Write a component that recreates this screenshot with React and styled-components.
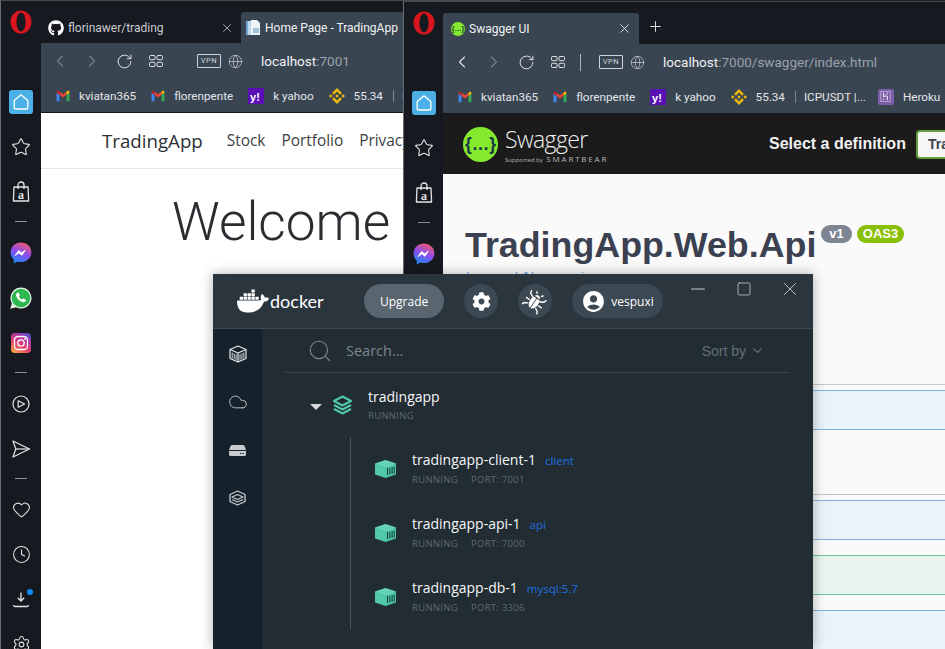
import React, { useId } from 'react'
import styled, { createGlobalStyle } from 'styled-components'
import { FaGithub, FaCog } from 'react-icons/fa'
import { MdAccountCircle } from 'react-icons/md'
import { SiDocker, SiBinance, SiHeroku } from 'react-icons/si'
import { ChevronLeft, ChevronRight, RotateCw, Globe, X, Plus, Star, Heart, Clock, Settings, Search, Cloud, ChevronDown, Minus, Square } from 'lucide-react'

const GlobalStyle = createGlobalStyle`
  html, body { margin: 0; padding: 0; background: #1b1e24; }
  * { box-sizing: border-box; }
`

const Desktop = styled.div`
  position: relative;
  width: 945px;
  height: 649px;
  overflow: hidden;
  font-family: "Open Sans", "Liberation Sans", sans-serif;
`

const BrowserFrame = styled.section`
  position: absolute;
  left: ${p => p.$x}px;
  top: ${p => p.$y}px;
  width: ${p => p.$w}px;
  height: 649px;
  display: flex;
  background: #16191f;
  border-top: 1px solid #4a4a4c;
  border-left: 1px solid #6a6c70;
  z-index: ${p => p.$z};
`

const RailBox = styled.nav`
  width: ${p => p.$w}px;
  flex: none;
  padding-top: 8px;
  display: flex;
  flex-direction: column;
  align-items: center;
  color: #e4e6e9;
`

const RailLogo = styled.div`
  height: 26px;
  margin-bottom: 44px;
  display: flex;
  align-items: center;
`

const RailItem = styled.div`
  position: relative;
  height: 45px;
  flex: none;
  display: flex;
  align-items: center;
  justify-content: center;
`

const RailDash = styled.div`
  flex: none;
  width: 12px;
  height: 1px;
  margin: 7px 0 8px;
  background: #8b8e93;
`

const HomeTile = styled.div`
  width: 24px;
  height: 24px;
  border-radius: 3px;
  background: #4ab0e6;
  display: flex;
  align-items: center;
  justify-content: center;
`

const Dot = styled.span`
  position: absolute;
  top: 12px;
  right: -3px;
  width: 6px;
  height: 6px;
  border-radius: 50%;
  background: #0a8cf0;
`

const BrowserMain = styled.div`
  flex: 1;
  min-width: 0;
  display: flex;
  flex-direction: column;
  font-family: Roboto, "Open Sans", sans-serif;
`

const TabRow = styled.div`
  height: 42px;
  flex: none;
  display: flex;
  align-items: flex-end;
`

const Tab = styled.div`
  width: ${p => p.$w}px;
  height: 31px;
  flex: none;
  display: flex;
  align-items: center;
  gap: 4px;
  padding: 0 7px 0 ${p => p.$pad}px;
  border-radius: ${p => (p.$active ? '3px 3px 0 0' : '0')};
  background: ${p => (p.$active ? '#3a4552' : 'transparent')};
  color: ${p => (p.$active ? '#f1f3f5' : '#c9ccd1')};
  font-size: 12px;
  white-space: nowrap;
`

const TabTitle = styled.span`
  flex: 1;
  overflow: hidden;
`

const NewTab = styled.div`
  margin: 0 0 6px 8px;
  color: #e8e9eb;
  height: 20px;
`

const Toolbar = styled.div`
  flex: none;
  height: 70px;
  background: #3a4552;
  border-bottom: 1px solid #14161a;
`

const NavRow = styled.div`
  height: 36px;
  padding-left: 3px;
  display: flex;
  align-items: center;
`

const NavBtn = styled.div`
  width: 32px;
  display: flex;
  justify-content: center;
  color: ${p => (p.$dim ? '#77808b' : '#dfe2e6')};
`

const NavDivider = styled.div`
  width: 1px;
  height: 17px;
  margin: 0 18px 0 6px;
  background: ${p => (p.$hidden ? 'transparent' : '#aeb3b9')};
`

const VpnBadge = styled.div`
  width: 24px;
  height: 14px;
  border: 1px solid #cfd3d7;
  border-radius: 1px;
  color: #cfd3d7;
  font-size: 7.5px;
  letter-spacing: 0.6px;
  line-height: 12px;
  text-align: center;
`

const GlobeSlot = styled.div`
  margin: 0 18px 0 7px;
  height: 15px;
  display: flex;
  color: #cfd3d7;
`

const Url = styled.div`
  font-size: 13.5px;
  color: #9aa2ab;
  white-space: nowrap;
  b { font-weight: 400; color: #f0f2f4; }
`

const BookmarkRow = styled.div`
  height: 33px;
  padding-left: 15px;
  display: flex;
  align-items: center;
  gap: 15px;
  overflow: hidden;
`

const Bookmark = styled.div`
  display: flex;
  align-items: center;
  gap: 9px;
  flex: none;
  font-size: 11.7px;
  color: #e3e5e8;
  white-space: nowrap;
`

const BookmarkBar = styled.span`
  flex: none;
  width: 1px;
  height: 12px;
  margin: 0 -7px 0 -5px;
  background: #7f8791;
`

const Page = styled.div`
  flex: 1;
  background: #fff;
  font-family: "Open Sans", sans-serif;
`

const TopNav = styled.div`
  height: 56px;
  padding-left: 61px;
  display: flex;
  align-items: center;
  gap: 16px;
  border-bottom: 1px solid #e6e6e6;
  color: #3a3f45;
  font-size: 15.4px;
  white-space: nowrap;
`

const Brand = styled.span`
  font-size: 18.7px;
  margin-right: 8px;
  color: #2b3036;
`

const Welcome = styled.h1`
  margin: 0;
  padding: 17px 0 0 131px;
  font-family: Roboto, sans-serif;
  font-size: 53.2px;
  line-height: 72px;
  font-weight: 300;
  color: #2a2d31;
  white-space: nowrap;
`

const SwaggerBar = styled.header`
  height: 60px;
  flex: none;
  padding: 0 0 0 20px;
  background: #1b1b1b;
  display: flex;
  align-items: center;
  white-space: nowrap;
  font-family: "Open Sans", sans-serif;
  > * { flex: none; }
`

const SwaggerMark = styled.div`
  margin-left: 7px;
  color: #fff;
  width: 264px;
`

const SwaggerWord = styled.div`
  font-size: 23px;
  font-weight: 300;
  line-height: 30px;
  letter-spacing: -0.6px;
  color: #f1f1f1;
`

const SwaggerSub = styled.div`
  font-size: 6px;
  line-height: 9px;
  color: #b8b8b8;
  b { font-size: 8px; font-weight: 400; letter-spacing: 1.8px; margin-left: 2px; }
`

const DefinitionLabel = styled.div`
  font: 700 16px "Liberation Sans", sans-serif;
  color: #f2f2f2;
`

const DefinitionSelect = styled.div`
  margin-left: 10px;
  width: 120px;
  height: 29px;
  padding-left: 10px;
  border: 2px solid #62a03f;
  border-radius: 4px;
  background: #f7f7f7;
  color: #3b4151;
  font: 700 14px/25px "Liberation Sans", sans-serif;
`

const SwaggerBody = styled.div`
  flex: 1;
  background: #fafafa;
  font-family: "Liberation Sans", sans-serif;
`

const InfoBlock = styled.div`
  height: 210px;
  padding: 49px 0 0 22px;
`

const TitleRow = styled.div`
  display: flex;
  align-items: flex-start;
  gap: 5px;
  white-space: nowrap;
`

const ApiTitle = styled.h2`
  margin: 0;
  font-size: 35.8px;
  line-height: 44px;
  font-weight: 700;
  color: #3b4151;
`

const VersionBadge = styled.span`
  margin-top: 2px;
  height: 18px;
  padding: 0 ${p => p.$pad}px;
  border-radius: 9px;
  background: ${p => p.$bg};
  color: #fff;
  font-size: 13px;
  font-weight: 700;
  line-height: 18px;
`

const SpecLink = styled.div`
  color: #4990e2;
  font-size: 12px;
  margin-top: 3px;
`

const TagHead = styled.div`
  height: ${p => p.$h}px;
  margin-bottom: 5px;
  border-bottom: 1px solid #c4c4c6;
`

const OpBlock = styled.div`
  height: ${p => p.$h || 40}px;
  margin-bottom: 15px;
  border-top: 1px solid ${p => p.$line};
  border-bottom: 1px solid ${p => p.$line};
  background: ${p => p.$bg};
`

const DockerWindow = styled.section`
  position: absolute;
  left: 213px;
  top: 274px;
  width: 600px;
  height: 375px;
  z-index: 3;
  display: flex;
  flex-direction: column;
  background: #222c33;
  color: #fff;
  box-shadow: 0 0 12px rgba(0, 0, 0, 0.3);
`

const DockerHead = styled.header`
  height: 55px;
  flex: none;
  padding: 10px 0 0 24px;
  display: flex;
  align-items: flex-start;
  background: #2a353d;
  border-bottom: 1px solid #3e4a52;
  > * { flex: none; }
`

const DockerLogo = styled.div`
  width: 107px;
  height: 34px;
  display: flex;
  align-items: center;
  gap: 1px;
  font-family: "Lato", sans-serif;
  font-size: 18px;
`

const PillBtn = styled.div`
  height: 34px;
  padding: 0 ${p => p.$pad}px;
  margin-left: 20px;
  border-radius: 17px;
  display: flex;
  align-items: center;
  gap: 5px;
  font-size: 12px;
  background: ${p => p.$bg};
`

const RoundBtn = styled.div`
  width: 34px;
  height: 34px;
  margin-left: 20px;
  border-radius: 50%;
  background: #3c4952;
  display: flex;
  align-items: center;
  justify-content: center;
`

const WinControls = styled.div`
  margin: -6px 0 0 auto;
  display: flex;
  color: #c9ced2;
`

const WinBtn = styled.div`
  width: 46px;
  height: 22px;
  display: flex;
  align-items: center;
  justify-content: center;
`

const DockerBody = styled.div`
  flex: 1;
  display: flex;
  min-height: 0;
`

const DockerSide = styled.aside`
  width: 49px;
  flex: none;
  padding-top: 1px;
  background: #15222b;
  color: #c7ccd0;
`

const SideItem = styled.div`
  height: 48px;
  display: flex;
  align-items: center;
  justify-content: center;
`

const DockerContent = styled.div`
  flex: 1;
  padding: 0 24px 0 23px;
`

const SearchBar = styled.div`
  height: 44px;
  padding: 0 24px 0 22px;
  display: flex;
  align-items: center;
  gap: 13px;
  border-bottom: 1px solid #3d484f;
  color: #7c878f;
`

const SearchText = styled.div`
  flex: 1;
  font-size: 14.5px;
`

const SortBy = styled.div`
  display: flex;
  align-items: center;
  gap: 4px;
  font: 14px "Liberation Sans", sans-serif;
  color: #636f77;
`

const ProjectRow = styled.div`
  height: 64px;
  padding-left: 25px;
  display: flex;
  align-items: center;
`

const Caret = styled.span`
  width: 0;
  height: 0;
  margin: 4px 10px 0 0;
  border-left: 6px solid transparent;
  border-right: 6px solid transparent;
  border-top: 6px solid #d4d8db;
`

const Labels = styled.div`
  margin-left: ${p => p.$gap}px;
  padding-top: 2px;
  white-space: nowrap;
`

const ItemName = styled.div`
  font-size: 14px;
  line-height: 18px;
  color: #f5f7f8;
  span { margin-left: 9px; font-size: 11.5px; color: #1f70e0; }
`

const ItemMeta = styled.div`
  margin-top: 1px;
  font-size: 9.5px;
  line-height: 18px;
  letter-spacing: 0.3px;
  color: #5f6b74;
  span { margin-left: 13px; }
`

const ContainerGroup = styled.div`
  margin-left: 65px;
  padding-left: 24px;
  border-left: 1px solid #4a565e;
`

const ContainerRow = styled.div`
  height: 64px;
  display: flex;
  align-items: center;
`

const OperaLogo = () => (
  <svg width="24" height="26" viewBox="0 0 24 26">
    <ellipse cx="12" cy="13" rx="10.5" ry="11.5" fill="#d9161f" />
    <ellipse cx="12" cy="13" rx="4.6" ry="9.4" fill="#16191f" />
  </svg>
)

const HomeGlyph = () => (
  <svg width="18" height="18" viewBox="0 0 18 18" fill="none" stroke="#fff" strokeWidth="1.3" strokeLinejoin="round">
    <path d="M2.2 7.6 9 1.8l6.8 5.8v7.2c0 .7-.5 1.2-1.2 1.2H3.4c-.7 0-1.2-.5-1.2-1.2z" />
  </svg>
)

const BagGlyph = () => (
  <svg width="18" height="21" viewBox="0 0 18 21" fill="none" stroke="currentColor" strokeWidth="1.3">
    <path d="M2 6h14l.6 14H1.400z" strokeLinejoin="round" />
    <path d="M6 8V4a3 3 0 0 1 6 0v4" />
    <text x="9" y="17.5" fontFamily="Liberation Serif, serif" fontSize="12" fontWeight="700" fill="currentColor" stroke="none" textAnchor="middle">a</text>
  </svg>
)

const MessengerGlyph = () => {
  const id = useId()
  return (
    <svg width="22" height="22" viewBox="0 0 22 22">
      <defs>
        <linearGradient id={id} x1="0.3" y1="1" x2="0.7" y2="0">
          <stop offset="0" stopColor="#1a8cf5" />
          <stop offset="0.5" stopColor="#8a4df0" />
          <stop offset="1" stopColor="#f2586e" />
        </linearGradient>
      </defs>
      <path fill={`url(#${id})`} d="M11 .6C5 .6.6 4.9.6 10.4c0 2.9 1.200 5.400 3.200 7.100v3.900l3.500-1.900c1.200.4 2.400.6 3.700.6 6 0 10.400-4.300 10.400-9.700S17 .6 11 .6z" />
      <path fill="#fff" d="m4.700 13.400 3.800-5.300 3.200 2.500 3.100-2.500c.4-.3 1-.1.800.4l-3.600 5.200-3.300-2.500-3.200 2.600c-.5.300-1-.100-.8-.4z" />
    </svg>
  )
}

const WhatsappGlyph = () => (
  <svg width="24" height="24" viewBox="0 0 24 24">
    <path fill="#e8f4ea" d="M12 1.500C6.100 1.500 1.500 6.200 1.500 12c0 1.900.5 3.700 1.400 5.200L1.300 22.800l5.700-1.500c1.500.8 3.200 1.200 5 1.200 5.900 0 10.500-4.700 10.500-10.500S17.900 1.500 12 1.500z" />
    <circle cx="12" cy="12" r="9.300" fill="#2fb84f" />
    <path fill="#fff" d="M8.500 6.700c.4-.4 1-.3 1.300.2l.9 1.800c.2.400.1.800-.2 1.100l-.6.6c.6 1.400 1.700 2.500 3.100 3.100l.6-.6c.3-.3.7-.4 1.100-.2l1.800.9c.5.3.6.9.2 1.300-.9 1-2.100 1.500-3.400 1.100-3.100-1-5.200-3.100-6.200-6.200-.4-1.200.2-2.300 1.400-3.100z" />
  </svg>
)

const InstagramGlyph = () => {
  const id = useId()
  return (
    <svg width="20" height="20" viewBox="0 0 20 20">
      <defs>
        <linearGradient id={id} x1="0.1" y1="1" x2="0.7" y2="0">
          <stop offset="0" stopColor="#fbb03b" />
          <stop offset="0.4" stopColor="#e8446a" />
          <stop offset="0.8" stopColor="#a936a8" />
          <stop offset="1" stopColor="#5a50c8" />
        </linearGradient>
      </defs>
      <rect width="20" height="20" rx="4" fill={`url(#${id})`} />
      <rect x="3.500" y="3.500" width="13" height="13" rx="3.500" fill="none" stroke="#fff" strokeWidth="1.300" />
      <circle cx="10" cy="10" r="3.200" fill="none" stroke="#fff" strokeWidth="1.300" />
      <circle cx="14" cy="6" r=".9" fill="#fff" />
    </svg>
  )
}

const PlayGlyph = () => (
  <svg width="18" height="18" viewBox="0 0 18 18" fill="none" stroke="currentColor" strokeWidth="1.200" strokeLinejoin="round">
    <circle cx="9" cy="9" r="8" />
    <path d="M6.200 5.800 12.600 9l-6.400 3.200z" />
  </svg>
)

const SendGlyph = () => (
  <svg width="20" height="18" viewBox="0 0 20 18" fill="none" stroke="currentColor" strokeWidth="1.200" strokeLinejoin="round">
    <path d="M2 1l16.500 8L2 17l2.800-8z" />
    <path d="M4.800 9h13.700" />
  </svg>
)

const DownloadGlyph = () => (
  <svg width="18" height="18" viewBox="0 0 18 18" fill="none" stroke="currentColor" strokeWidth="1.300">
    <path d="M9 1.500v8M5.800 6.800 9 10l3.200-3.200" />
    <path d="M1.500 14c0 1 .5 1.500 1.500 1.500h12c1 0 1.500-.5 1.500-1.500" />
  </svg>
)

const GridGlyph = () => (
  <svg width="14" height="12" viewBox="0 0 14 12" fill="none" stroke="currentColor" strokeWidth="1">
    <rect x=".5" y=".5" width="5.500" height="4.200" rx="1" />
    <rect x="8" y=".5" width="5.500" height="4.200" rx="1" />
    <rect x=".5" y="7.300" width="5.500" height="4.200" rx="1" />
    <rect x="8" y="7.300" width="5.500" height="4.200" rx="1" />
  </svg>
)

const GmailGlyph = () => (
  <svg width="14" height="14" viewBox="0 0 24 24">
    <path fill="#4285F4" d="M1 21h5V10L1 6.500z" />
    <path fill="#34A853" d="M18 21h5V6.500L18 10z" />
    <path fill="#EA4335" d="M6 10V4.500l6 4.500 6-4.500V10l-6 4.500z" />
    <path fill="#FBBC04" d="M18 4.500V10l5-3.500V5.500c0-2-2.500-3-4-1.800z" />
    <path fill="#C5221F" d="M1 5.500v1L6 10V4.500l-1-.8C3.500 2.500 1 3.500 1 5.500z" />
  </svg>
)

const YahooGlyph = () => (
  <svg width="16" height="16" viewBox="0 0 16 16">
    <rect width="16" height="16" fill="#5a0fb4" />
    <text x="7" y="12.500" fontFamily="Liberation Sans, sans-serif" fontSize="11" fontWeight="700" fill="#fff" textAnchor="middle">y!</text>
  </svg>
)

const HerokuTile = styled.span`
  width: 16px;
  height: 16px;
  margin-left: -3px;
  border-radius: 2px;
  background: #7a5fa8;
  color: #e9e3f3;
  display: flex;
  align-items: center;
  justify-content: center;
`

const PageGlyph = () => (
  <svg width="15" height="16" viewBox="0 0 15 16">
    <path fill="#bcd8ee" d="M0 1h6v14H0z" />
    <path fill="#eef3f7" d="M5 0h6l3 3v12H5z" />
    <path fill="#6fa8d6" d="M0 1h2v14H0z" />
    <path fill="#9ec2de" d="M7 8h6v5H7z" />
  </svg>
)

const SwaggerBadge = ({ size }) => (
  <svg width={size} height={size} viewBox="0 0 36 36">
    <circle cx="18" cy="18" r="18" fill="#85ea2d" />
    <text x="18" y="24" fontFamily="Liberation Sans, sans-serif" fontSize="18" fontWeight="700" fill="#173647" textAnchor="middle">{'{…}'}</text>
  </svg>
)

const BugGlyph = () => (
  <svg width="22" height="22" viewBox="0 0 22 22" fill="#fff" stroke="#fff" style={{ transform: 'rotate(35deg)' }}>
    <path stroke="none" d="M11 4.500c-1.500 0-2.800 1-3 2.300h6c-.2-1.300-1.500-2.300-3-2.300z" />
    <path stroke="none" d="M6.800 8h3.800v11.500C8.200 19 6.500 16.500 6.500 13zM15.200 8h-3.800v11.500c2.400-.5 4.100-3 4.100-6.500z" />
    <path fill="none" strokeWidth="1.400" d="M8.500 4 7 1.800M13.500 4 15 1.800M6.500 9 3 7 2 4M15.500 9 19 7l1 -3M6 13H1.500M16 13h4.500M6.500 16.500 3 18.500l-1 2.500M15.500 16.500l3.500 2 1 2.500" />
  </svg>
)

const StackGlyph = ({ color }) => (
  <svg width="21" height="20" viewBox="0 0 21 20" fill="none" stroke={color} strokeWidth="2" strokeLinejoin="round">
    <path d="M10.500 1.500 19 6l-8.500 4.500L2 6z" />
    <path d="M2 10l8.500 4.500L19 10" />
    <path d="M2 14l8.500 4.500L19 14" />
  </svg>
)

const ContainerGlyph = () => (
  <svg width="21" height="18" viewBox="0 0 21 18">
    <path fill="#4fc9a8" d="M10.500 0 21 3.500v11L10.500 18 0 14.500v-11z" />
    <path fill="#7fdcc2" opacity=".5" d="M10.500 0 21 3.500 10.500 7 0 3.500z" />
    <path stroke="#16404a" strokeWidth="1.100" d="M12.500 8v7M14.800 7.500v7M17.100 7v7M19.200 6.500v7" />
  </svg>
)

const CubeGlyph = () => (
  <svg width="18" height="18" viewBox="0 0 18 18" fill="none" stroke="#e6e9eb" strokeWidth="1.200" strokeLinejoin="round">
    <path d="M9 1l8 3.500v9L9 17l-8-3.500v-9z" />
    <path d="M1 4.500 9 8l8-3.500M9 8v9" />
    <path strokeWidth=".9" d="M3.200 7.500v6M5.200 8.300v6M7.100 9.200v6M11 9.200v6M12.900 8.300v6M14.800 7.500v6" />
  </svg>
)

const DiskGlyph = () => (
  <svg width="17" height="11" viewBox="0 0 17 11">
    <path fill="#c7ccd0" d="M3.500 0h10c1 0 1.800.5 2.200 1.500L17 5H0l1.300-3.500C1.700.5 2.500 0 3.500 0z" />
    <path fill="#c7ccd0" d="M0 6h17v3.500c0 .8-.7 1.500-1.500 1.500h-14C.7 11 0 10.300 0 9.500z" />
    <path fill="#15222b" d="M11 8h1.500v1H11zM13.500 8H15v1h-1.500z" />
  </svg>
)

const VolumeGlyph = () => (
  <svg width="17" height="16" viewBox="0 0 17 16" fill="none" stroke="#c7ccd0" strokeLinejoin="round">
    <path strokeWidth="1.300" d="M8.500 1 16 4.500v7L8.500 15 1 11.500v-7z" />
    <path strokeWidth="1.100" d="M3 7l5.500 2.500L14 7 8.500 4.500z" />
    <path strokeWidth="1.100" d="M3 9.500 8.500 12 14 9.500" />
  </svg>
)

const Rail = ({ width }) => (
  <RailBox $w={width}>
    <RailLogo><OperaLogo /></RailLogo>
    <RailItem><HomeTile><HomeGlyph /></HomeTile></RailItem>
    <RailItem><Star size={20} strokeWidth={1.3} /></RailItem>
    <RailItem><BagGlyph /></RailItem>
    <RailDash />
    <RailItem><MessengerGlyph /></RailItem>
    <RailItem><WhatsappGlyph /></RailItem>
    <RailItem><InstagramGlyph /></RailItem>
    <RailDash />
    <RailItem><PlayGlyph /></RailItem>
    <RailItem><SendGlyph /></RailItem>
    <RailDash />
    <RailItem><Heart size={19} strokeWidth={1.3} /></RailItem>
    <RailItem><Clock size={19} strokeWidth={1.3} /></RailItem>
    <RailItem><DownloadGlyph /><Dot /></RailItem>
    <RailItem><Settings size={19} strokeWidth={1.3} /></RailItem>
  </RailBox>
)

const NavBar = ({ backDim, divider, host, path }) => (
  <NavRow>
    <NavBtn $dim={backDim}><ChevronLeft size={20} strokeWidth={1.3} /></NavBtn>
    <NavBtn $dim><ChevronRight size={20} strokeWidth={1.3} /></NavBtn>
    <NavBtn><RotateCw size={17} strokeWidth={1.4} /></NavBtn>
    <NavBtn><GridGlyph /></NavBtn>
    <NavDivider $hidden={!divider} />
    <VpnBadge>VPN</VpnBadge>
    <GlobeSlot><Globe size={15} strokeWidth={1.1} /></GlobeSlot>
    <Url><b>{host}</b>{path}</Url>
  </NavRow>
)

const Bookmarks = () => (
  <BookmarkRow>
    <Bookmark><GmailGlyph />kviatan365</Bookmark>
    <Bookmark><GmailGlyph />florenpente</Bookmark>
    <Bookmark><YahooGlyph />k yahoo</Bookmark>
    <Bookmark><SiBinance size={16} color="#f0b90b" />55.34</Bookmark>
    <BookmarkBar />
    <Bookmark>ICPUSDT |...</Bookmark>
    <Bookmark><HerokuTile><SiHeroku size={11} /></HerokuTile>Heroku</Bookmark>
  </BookmarkRow>
)

const containers = [
  { name: 'tradingapp-client-1', image: 'client', port: 7001 },
  { name: 'tradingapp-api-1', image: 'api', port: 7000 },
  { name: 'tradingapp-db-1', image: 'mysql:5.7', port: 3306 },
]

const BLUE = { $line: '#7fb0e4', $bg: '#eaf3fb' }
const GREEN = { $line: '#69c597', $bg: '#e7f5ee' }

export default function App() {
  return (
    <Desktop>
      <GlobalStyle />

      <BrowserFrame $x={0} $y={0} $w={520} $z={1}>
        <Rail width={40} />
        <BrowserMain>
          <TabRow>
            <Tab $w={200} $pad={7}>
              <FaGithub size={16} color="#fff" />
              <TabTitle>florinawer/trading</TabTitle>
              <X size={14} strokeWidth={1.3} />
            </Tab>
            <Tab $w={240} $pad={5} $active>
              <PageGlyph />
              <TabTitle>Home Page - TradingApp</TabTitle>
            </Tab>
          </TabRow>
          <Toolbar>
            <NavBar backDim host="localhost" path=":7001" />
            <Bookmarks />
          </Toolbar>
          <Page>
            <TopNav>
              <Brand>TradingApp</Brand>
              <span>Stock</span>
              <span>Portfolio</span>
              <span>Privacy</span>
            </TopNav>
            <Welcome>Welcome</Welcome>
          </Page>
        </BrowserMain>
      </BrowserFrame>

      <BrowserFrame $x={403} $y={1} $w={542} $z={2}>
        <Rail width={39} />
        <BrowserMain>
          <TabRow>
            <Tab $w={196} $pad={8} $active>
              <SwaggerBadge size={14} />
              <TabTitle>Swagger UI</TabTitle>
              <X size={15} strokeWidth={1.4} />
            </Tab>
            <NewTab><Plus size={17} strokeWidth={1.3} /></NewTab>
          </TabRow>
          <Toolbar>
            <NavBar divider host="localhost" path=":7000/swagger/index.html" />
            <Bookmarks />
          </Toolbar>
          <SwaggerBar>
            <SwaggerBadge size={35} />
            <SwaggerMark>
              <SwaggerWord>Swagger</SwaggerWord>
              <SwaggerSub>Supported by <b>SMARTBEAR</b></SwaggerSub>
            </SwaggerMark>
            <DefinitionLabel>Select a definition</DefinitionLabel>
            <DefinitionSelect>TradingApp</DefinitionSelect>
          </SwaggerBar>
          <SwaggerBody>
            <InfoBlock>
              <TitleRow>
                <ApiTitle>TradingApp.Web.Api</ApiTitle>
                <VersionBadge $bg="#7d8492" $pad={8}>v1</VersionBadge>
                <VersionBadge $bg="#89bf04" $pad={6}>OAS3</VersionBadge>
              </TitleRow>
              <SpecLink>/swagger/v1/swagger.json</SpecLink>
            </InfoBlock>
            <TagHead $h={1} />
            <OpBlock {...BLUE} />
            <TagHead $h={50} />
            <OpBlock {...BLUE} />
            <OpBlock {...GREEN} />
            <OpBlock {...BLUE} $h={60} />
          </SwaggerBody>
        </BrowserMain>
      </BrowserFrame>

      <DockerWindow>
        <DockerHead>
          <DockerLogo>
            <SiDocker size={32} />
            docker
          </DockerLogo>
          <PillBtn $bg="#5a666f" $pad={16}>Upgrade</PillBtn>
          <RoundBtn><FaCog size={19} /></RoundBtn>
          <RoundBtn><BugGlyph /></RoundBtn>
          <PillBtn $bg="#3c4952" $pad={9}>
            <MdAccountCircle size={25} />
            vespuxi
          </PillBtn>
          <WinControls>
            <WinBtn><Minus size={22} strokeWidth={1.1} /></WinBtn>
            <WinBtn><Square size={16} strokeWidth={1.2} /></WinBtn>
            <WinBtn><X size={22} strokeWidth={1} /></WinBtn>
          </WinControls>
        </DockerHead>
        <DockerBody>
          <DockerSide>
            <SideItem><CubeGlyph /></SideItem>
            <SideItem><Cloud size={20} strokeWidth={1.1} /></SideItem>
            <SideItem><DiskGlyph /></SideItem>
            <SideItem><VolumeGlyph /></SideItem>
          </DockerSide>
          <DockerContent>
            <SearchBar>
              <Search size={26} strokeWidth={1} />
              <SearchText>Search...</SearchText>
              <SortBy>Sort by <ChevronDown size={15} /></SortBy>
            </SearchBar>
            <ProjectRow>
              <Caret />
              <StackGlyph color="#4fc9a8" />
              <Labels $gap={15}>
                <ItemName>tradingapp</ItemName>
                <ItemMeta>RUNNING</ItemMeta>
              </Labels>
            </ProjectRow>
            <ContainerGroup>
              {containers.map(c => (
                <ContainerRow key={c.name}>
                  <ContainerGlyph />
                  <Labels $gap={16}>
                    <ItemName>{c.name}<span>{c.image}</span></ItemName>
                    <ItemMeta>RUNNING<span>PORT: {c.port}</span></ItemMeta>
                  </Labels>
                </ContainerRow>
              ))}
            </ContainerGroup>
          </DockerContent>
        </DockerBody>
      </DockerWindow>
    </Desktop>
  )
}
